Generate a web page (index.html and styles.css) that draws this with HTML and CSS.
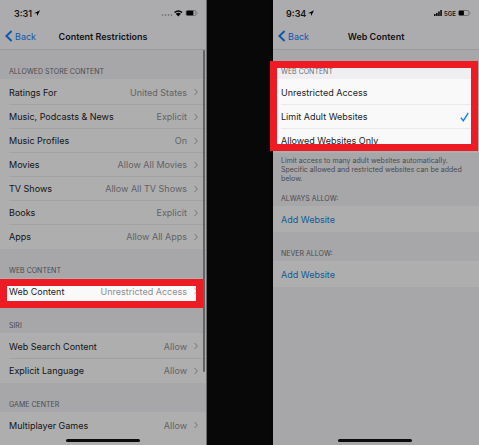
FILE: index.html
```
<!DOCTYPE html>
<html lang="en">
<head>
  <meta charset="UTF-8" />
  <meta name="viewport" content="width=device-width, initial-scale=1" />
  <title>Content Restrictions</title>
  <link rel="stylesheet" href="styles.css">
</head>
<body>
  <svg class="sprite" aria-hidden="true">
    <symbol id="chevron" viewBox="0 0 4 8"><path d="M0.5 1 L3.4 4 L0.5 7" /></symbol>
    <symbol id="back" viewBox="0 0 8 12"><path d="M6.6 1 L1.4 6 L6.6 11" /></symbol>
    <symbol id="location" viewBox="0 0 6 6"><path d="M0 3.2 L6 0.2 L3.2 6 L2.9 3.3 Z" /></symbol>
  </svg>

  <div class="screens">
    <section class="phone phone-left">
      <div class="status">
        <span class="time">3:31</span>
        <svg class="location"><use href="#location" /></svg>
        <svg class="indicators" width="37" height="8" viewBox="0 0 37 8">
          <g fill="#8a8a8c">
            <circle cx="1.5" cy="6" r="0.8" /><circle cx="4.5" cy="6" r="0.8" />
            <circle cx="7.5" cy="6" r="0.8" /><circle cx="10.5" cy="6" r="0.8" />
          </g>
          <path d="M13 3 Q17.3 -0.6 21.6 3 L20.5 4.1 Q17.3 1.6 14.1 4.1 Z" />
          <path d="M14.7 4.7 Q17.3 2.6 19.9 4.7 L17.3 7.4 Z" />
          <rect x="25" y="1.5" width="10" height="5" rx="1.5" fill="none" stroke="#8a8a8c" stroke-width="0.8" />
          <rect x="25.4" y="1.8" width="7" height="4.4" rx="0.8" />
          <path d="M36 3 Q37 4 36 5 Z" fill="#8a8a8c" />
        </svg>
      </div>
      <nav class="nav">
        <a class="back" href="#"><svg><use href="#back" /></svg>Back</a>
        <h1>Content Restrictions</h1>
      </nav>

      <div class="group">
        <h2>ALLOWED STORE CONTENT</h2>
        <div class="list">
          <a class="row" href="#">Ratings For<span class="value">United States</span><svg class="chevron"><use href="#chevron" /></svg></a>
          <a class="row" href="#">Music, Podcasts &amp; News<span class="value">Explicit</span><svg class="chevron"><use href="#chevron" /></svg></a>
          <a class="row" href="#">Music Profiles<span class="value">On</span><svg class="chevron"><use href="#chevron" /></svg></a>
          <a class="row" href="#">Movies<span class="value">Allow All Movies</span><svg class="chevron"><use href="#chevron" /></svg></a>
          <a class="row" href="#">TV Shows<span class="value">Allow All TV Shows</span><svg class="chevron"><use href="#chevron" /></svg></a>
          <a class="row" href="#">Books<span class="value">Explicit</span><svg class="chevron"><use href="#chevron" /></svg></a>
          <a class="row" href="#">Apps<span class="value">Allow All Apps</span><svg class="chevron"><use href="#chevron" /></svg></a>
        </div>
      </div>

      <div class="group">
        <h2>WEB CONTENT</h2>
        <div class="list">
          <a class="row" href="#">Web Content<span class="value">Unrestricted Access</span><svg class="chevron"><use href="#chevron" /></svg></a>
        </div>
        <div class="highlight highlight-row"></div>
      </div>

      <div class="group">
        <h2>SIRI</h2>
        <div class="list">
          <a class="row" href="#">Web Search Content<span class="value">Allow</span><svg class="chevron"><use href="#chevron" /></svg></a>
          <a class="row" href="#">Explicit Language<span class="value">Allow</span><svg class="chevron"><use href="#chevron" /></svg></a>
        </div>
      </div>

      <div class="group group-last">
        <h2>GAME CENTER</h2>
        <div class="list">
          <a class="row" href="#">Multiplayer Games<span class="value">Allow</span><svg class="chevron"><use href="#chevron" /></svg></a>
        </div>
      </div>
      <div class="scrollbar"></div>
      <div class="home-bar"></div>
    </section>

    <section class="phone phone-right">
      <div class="status">
        <span class="time">9:34</span>
        <svg class="location"><use href="#location" /></svg>
        <span class="network">
          <svg width="8" height="6" viewBox="0 0 8 6"><path d="M0 4h1.5v2H0z M2.1 3h1.5v3H2.1z M4.2 1.6h1.5v4.4H4.2z M6.3 0h1.5v6H6.3z" /></svg>
          5GE
          <svg width="13" height="8" viewBox="0 0 13 8">
            <rect x="0.5" y="1.5" width="10.5" height="5" rx="1.5" fill="none" stroke="#8a8a8c" stroke-width="0.8" />
            <rect x="0.9" y="1.8" width="5" height="4.4" rx="0.6" />
            <path d="M12 3 Q13 4 12 5 Z" fill="#8a8a8c" />
          </svg>
        </span>
      </div>
      <nav class="nav">
        <a class="back" href="#"><svg><use href="#back" /></svg>Back</a>
        <h1>Web Content</h1>
      </nav>

      <div class="group">
        <h2>WEB CONTENT</h2>
        <div class="list">
          <label class="row"><input type="radio" name="access">Unrestricted Access<svg class="check" viewBox="0 0 9 10"><path d="M0.8 5.6 L3.3 8.8 L8.2 0.9" /></svg></label>
          <label class="row"><input type="radio" name="access" checked>Limit Adult Websites<svg class="check" viewBox="0 0 9 10"><path d="M0.8 5.6 L3.3 8.8 L8.2 0.9" /></svg></label>
          <label class="row"><input type="radio" name="access">Allowed Websites Only<svg class="check" viewBox="0 0 9 10"><path d="M0.8 5.6 L3.3 8.8 L8.2 0.9" /></svg></label>
        </div>
        <div class="highlight highlight-options"></div>
      </div>

      <p class="note">Limit access to many adult websites automatically. Specific allowed and restricted websites can be added below.</p>

      <div class="group">
        <h2>ALWAYS ALLOW:</h2>
        <div class="list">
          <button class="row add" type="button">Add Website</button>
        </div>
      </div>

      <div class="group">
        <h2>NEVER ALLOW:</h2>
        <div class="list">
          <button class="row add" type="button">Add Website</button>
        </div>
      </div>
      <div class="home-bar"></div>
    </section>
  </div>
</body>
</html>
```

FILE: styles.css
```
* {
  margin: 0;
  padding: 0;
  box-sizing: border-box;
}

body {
  background: #080808;
  font-family: Inter, "Liberation Sans", sans-serif;
  font-size: 9px;
  color: #1c1c1e;
}

.sprite {
  position: absolute;
  width: 0;
  height: 0;
}

.screens {
  display: grid;
  grid-template-columns: 207fr 209fr;
  column-gap: 63px;
  min-height: 100vh;
}

.phone {
  position: relative;
  display: flex;
  flex-direction: column;
  overflow: hidden;
  background: #efeff2;
}

.phone-left {
  border-right: 1px solid #6c6c6e;
}

/* dark bezel that the highlight frame runs over */
.phone-right {
  padding-left: 3px;
  background: linear-gradient(to right, #080808 3px, #efeff2 3px);
}

.status {
  display: flex;
  align-items: center;
  gap: 2px;
  height: 23px;
  padding: 3px 8px 0 14px;
  background: #f7f7f9;
}

.time {
  font-weight: 600;
}

.phone-right .status {
  padding-left: 13px;
}

.location {
  width: 6px;
  height: 6px;
}

.indicators,
.network {
  margin-left: auto;
}

.network {
  display: flex;
  align-items: center;
  gap: 2px;
  font-size: 6px;
  font-weight: 600;
}

.nav {
  display: grid;
  grid-template-columns: 1fr auto 1fr;
  align-items: center;
  height: 27px;
  padding: 0 5px;
  background: #f7f7f9;
  border-bottom: 1px solid #dcdce0;
}

.back {
  display: flex;
  align-items: center;
  gap: 2px;
  color: #147efb;
  text-decoration: none;
}

.back svg {
  width: 8px;
  height: 12px;
  fill: none;
  stroke: currentColor;
  stroke-width: 2;
}

h1 {
  font-size: 9px;
  font-weight: 600;
}

.group {
  position: relative;
}

h2 {
  padding: 17px 9px 2px;
  font-size: 7px;
  font-weight: 400;
  line-height: 10px;
  color: #6d6d72;
}

.list {
  padding: 1px 0 1px 9px;
  background: #f9f9fa;
}

.group-last {
  display: flex;
  flex: 1;
  flex-direction: column;
}

.group-last .list {
  flex: 1;
}

.row {
  display: flex;
  align-items: center;
  width: 100%;
  height: 24px;
  padding-right: 8px;
  border: 0;
  background: none;
  font: inherit;
  color: inherit;
  text-decoration: none;
}

.row + .row {
  border-top: 1px solid #e9e9ec;
}

.value {
  margin-left: auto;
  color: #8e8e93;
}

.chevron {
  width: 4px;
  height: 8px;
  margin-left: 7px;
  fill: none;
  stroke: #a6a6aa;
}

.row input {
  width: 0;
  appearance: none;
}

.check {
  display: none;
  width: 9px;
  height: 10px;
  margin-left: auto;
  fill: none;
  stroke: #147efb;
  stroke-width: 1.4;
}

input:checked ~ .check {
  display: block;
}

.add {
  color: #1a84d8;
}

.note {
  padding: 3px 8px 0;
  font-size: 7px;
  line-height: 9px;
  color: #6d6d72;
}

.note + .group h2 {
  padding-top: 11px;
}

.phone-right h2,
.phone-right .list {
  padding-left: 8px;
}

.phone-right .row {
  padding-right: 10px;
}

/* red frame, everything outside of it is dimmed */
.highlight {
  position: absolute;
  z-index: 2;
  border: 7px solid #ed1c24;
  box-shadow: 0 0 0 1000px rgba(0, 0, 0, 0.3);
  pointer-events: none;
}

.highlight-row {
  top: 30px;
  right: 3px;
  bottom: -4px;
  left: 0;
}

.highlight-options {
  top: 11px;
  right: 1px;
  bottom: 2px;
  left: -3px;
}

.scrollbar {
  position: absolute;
  top: 50px;
  right: 1px;
  width: 2px;
  height: 322px;
  border-radius: 1px;
  background: #8e8e92;
}

.home-bar {
  position: absolute;
  bottom: 3px;
  left: 50%;
  width: 74px;
  height: 3px;
  margin-left: -37px;
  border-radius: 2px;
  background: #111;
}
```
